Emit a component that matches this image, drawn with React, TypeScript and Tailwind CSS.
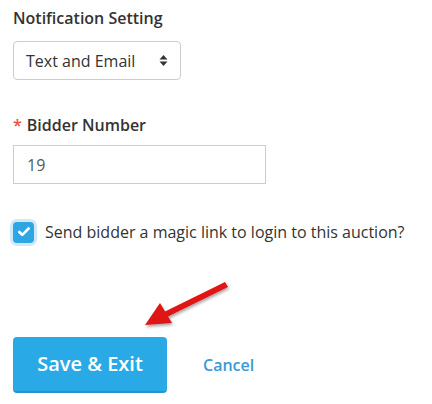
import { Check } from "lucide-react";

const font = { fontFamily: '"Open Sans", "Noto Sans", sans-serif' };

export default function App() {
    return (
        <div
            className="relative w-[432px] h-[404px] bg-white pl-[13px] pt-[6px] text-[#333]"
            style={font}
        >
            {/* Notification setting */}
            <label className="block text-[16px] leading-[24px] font-[550]">
                Notification Setting
            </label>
            <div className="mt-[11px] flex items-center justify-between w-[168px] h-[39px] rounded-[4px] border border-[#ccc] pl-[12px] pr-[12px]">
                <span className="text-[16px] text-[#333]">Text and Email</span>
                <svg width="9" height="13" viewBox="0 0 9 13" className="text-[#333]">
                    <path d="M4.5 1 L8.5 5.5 L0.5 5.5 Z" fill="currentColor" />
                    <path d="M4.5 12 L8.5 7.5 L0.5 7.5 Z" fill="currentColor" />
                </svg>
            </div>

            {/* Bidder number */}
            <label className="mt-[33px] block text-[16px] leading-[24px] font-[550]">
                <span className="text-[#e5533c] mr-[5px]">*</span>
                Bidder Number
            </label>
            <div className="mt-[8px] w-[253px] h-[39px] border border-[#ccc] pl-[13px] flex items-center">
                <span className="text-[16px] text-[#4d5b5e]">19</span>
            </div>

            {/* Magic link */}
            <div className="mt-[36px] flex items-center gap-[11px]">
                <span className="flex items-center justify-center w-[21px] h-[21px] rounded-[4px] bg-[#2ea6e3] ring-[3px] ring-[#cfe9f8]">
                    <Check size={14} strokeWidth={4.5} className="text-white" />
                </span>
                <span className="text-[16px] text-[#333]">
                    Send bidder a magic link to login to this auction?
                </span>
            </div>

            {/* Actions */}
            <div className="mt-[93px] flex items-center gap-[36px]">
                <button className="w-[154px] h-[56px] rounded-[4px] bg-[#29aae6] border-b-[2px] border-[#2296cc] text-white text-[20px] font-semibold">
                    Save &amp; Exit
                </button>
                <a className="text-[16px] font-semibold text-[#3a9ad9]">Cancel</a>
            </div>

            {/* Annotation arrow */}
            <svg
                className="absolute left-[139px] top-[278px]"
                width="95"
                height="55"
                viewBox="0 0 95 55"
            >
                <defs>
                    <filter id="sh" x="-20%" y="-20%" width="140%" height="140%">
                        <feDropShadow dx="1" dy="2" stdDeviation="1.5" floodColor="#000" floodOpacity="0.35" />
                    </filter>
                </defs>
                <g filter="url(#sh)" fill="#e01515">
                    <path d="M86 4 L89 9 L28 39 L25 34 Z" />
                    <path d="M6 47 L21 25 L33 45 Z" />
                </g>
            </svg>
        </div>
    );
}
